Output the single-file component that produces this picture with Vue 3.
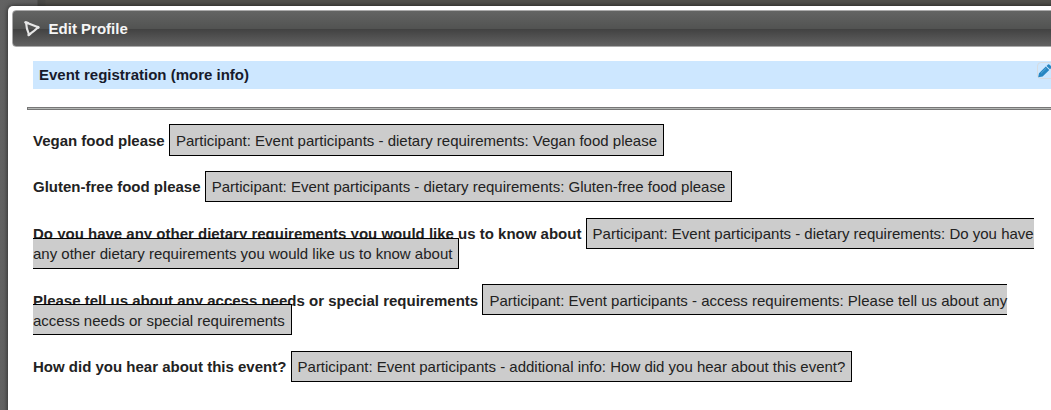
<script setup>
const fields = [
  { label: 'Vegan food please', token: 'Participant: Event participants - dietary requirements: Vegan food please' },
  { label: 'Gluten-free food please', token: 'Participant: Event participants - dietary requirements: Gluten-free food please' },
  { label: 'Do you have any other dietary requirements you would like us to know about', token: 'Participant: Event participants - dietary requirements: Do you have any other dietary requirements you would like us to know about' },
  { label: 'Please tell us about any access needs or special requirements', token: 'Participant: Event participants - access requirements: Please tell us about any access needs or special requirements' },
  { label: 'How did you hear about this event?', token: 'Participant: Event participants - additional info: How did you hear about this event?' },
]
</script>

<template>
  <div class="backdrop">
    <section class="dialog">
      <header class="titlebar">
        <svg class="logo" width="18" height="18" viewBox="0 0 18 18">
          <path d="M3 2.4 L15.3 7.2 Q11 11.2 6 14.6 Q3.4 9 3 2.4 Z" fill="none" stroke="#e6e6e6" stroke-width="2.1" stroke-linejoin="round" />
          <path d="M2.4 2.4 L4.8 3 M5.6 15 L7 14 M14.8 7 L15.4 7.5" stroke="#e6e6e6" stroke-width="2.5" stroke-linecap="round" />
        </svg>
        <h1>Edit Profile</h1>
      </header>
      <div class="heading">
        <h2>Event registration (more info)</h2>
        <button class="edit" aria-label="Edit">
          <svg width="14" height="14" viewBox="0 0 14 14">
            <path d="M.2 13.2 L1 9.2 L7.8 2.5 L11.3 6 L4.6 12.4 Z M8.5 1.9 L10 .6 Q10.8 -.1 11.6 .7 L13.3 2.4 Q14 3.1 13.3 3.9 L12 5.3 Z" fill="#2786c2" />
            <path d="M3 9.3 L8.2 4.2" stroke="#62addb" stroke-width=".8" />
          </svg>
        </button>
      </div>
      <div class="rule"></div>
      <div class="fields">
        <p v-for="field in fields" :key="field.label"><strong>{{ field.label }}</strong> <span class="token"><span class="value">{{ field.token }}</span></span></p>
      </div>
    </section>
  </div>
</template>

<style>
html, body { margin: 0; overflow: hidden; }
</style>

<style scoped>
.backdrop {
  box-sizing: border-box;
  width: 1051px;
  height: 410px;
  padding: 6px 0 0 8px;
  overflow: hidden;
  background: linear-gradient(90deg, #626262 0, #5e5e5e 37px, #484846 38px, #4b4b47 45px, #504f4a 46px);
  font-family: "Liberation Sans", Arial, sans-serif;
  font-size: 15px;
  color: #222;
}
.dialog {
  box-sizing: border-box;
  width: 1100px;
  height: 440px;
  padding: 4px;
  background: #fff;
  border-radius: 5px;
  box-shadow: 0 0 5px rgba(0, 0, 0, .65);
}
.titlebar {
  box-sizing: border-box;
  display: flex;
  align-items: center;
  gap: 7.6px;
  height: 37px;
  padding-left: 10px;
  border: 1px solid #aaa;
  border-radius: 4px;
  background: linear-gradient(#636463 0, #525352 50%, #414141 51%, #626262 100%);
}
.logo { display: block; }
h1 { margin: 0; font-size: 15px; line-height: 20px; color: #f5f5f5; }
.heading {
  display: flex;
  justify-content: space-between;
  align-items: flex-start;
  width: 1018px;
  height: 28px;
  margin: 14px 0 0 21px;
  background: #cde7ff;
}
h2 { margin: 0 0 0 6px; font-size: 15px; line-height: 28px; color: #171a2b; }
.edit {
  box-sizing: border-box;
  display: flex;
  width: 18px;
  height: 17px;
  margin: 1px -4px 0 0;
  padding: 1px 0 0;
  border: 1px solid #d6dbe0;
  border-radius: 4px;
  background: none;
}
.edit svg { flex: none; margin-left: -.2px; overflow: visible; }
.rule {
  height: 1px;
  margin: 18px 0 0 15px;
  border: 1px solid #777;
  background: #b5b8b5;
}
.fields {
  width: 1018px;
  margin: 20.75px 0 0 21px;
  line-height: 20px;
}
p { margin: 0 0 26.6px; }
.token {
  padding: 6.35px 6px 5.75px;
  border: 1px solid #000;
  background: #ccc;
}
.value { position: relative; }
</style>
